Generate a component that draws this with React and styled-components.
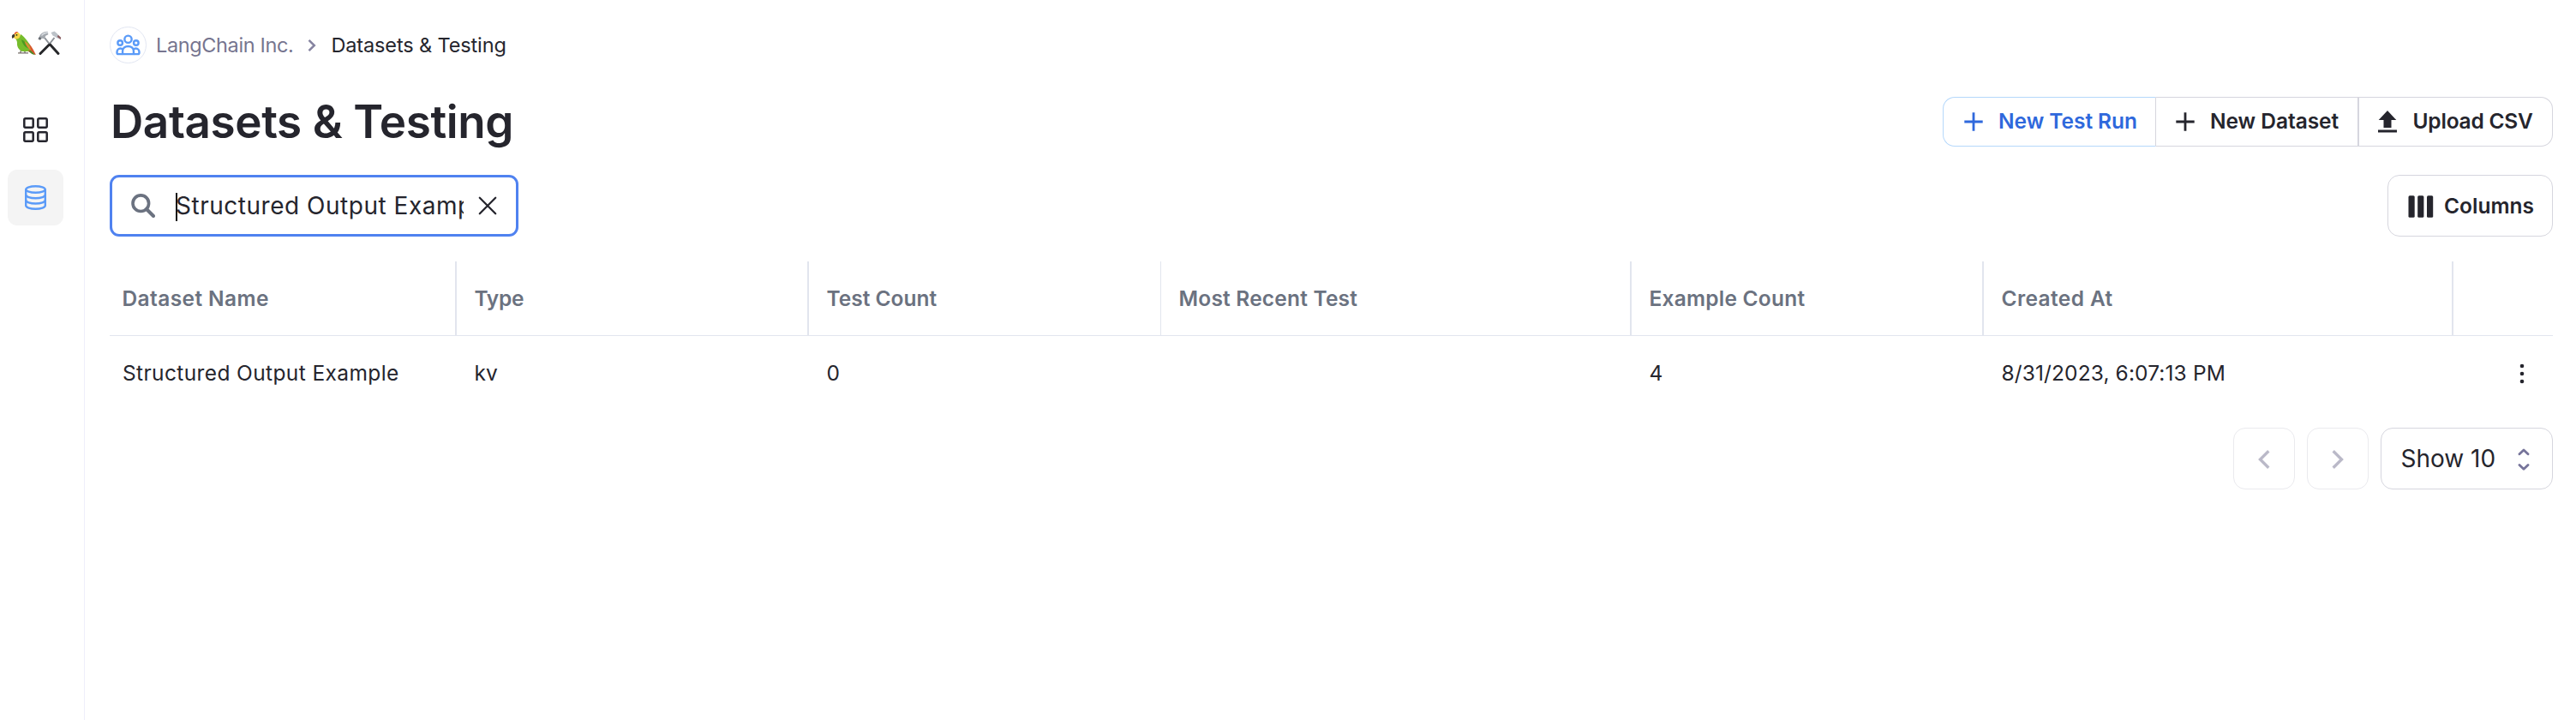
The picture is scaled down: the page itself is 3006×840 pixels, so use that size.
import React from "react";
import styled, { createGlobalStyle } from "styled-components";

const ink = "#25252d";
const blue = "#5b9bf8";
const slate = "#6b7280";
const line = "#e2e5ee";
const outline = "#d6d6de";

const GlobalStyle = createGlobalStyle`
  * { box-sizing: border-box; }
  body {
    margin: 0;
    background: #fff;
    color: ${ink};
    font-family: Inter, "Liberation Sans", sans-serif;
    font-size: 24.5px;
    line-height: 1.2;
  }
  button { font: inherit; color: inherit; background: none; border: 0; padding: 0; }
  svg { display: block; flex: none; }
`;

const Page = styled.div`
  display: flex;
  height: 840px;
  overflow: hidden;
`;

const Sidebar = styled.nav`
  width: 99px;
  flex: none;
  padding: 36px 0 0 9px;
  border-right: 1px solid #eeeefa;
  display: flex;
  flex-direction: column;
`;

const Logo = styled.div`
  display: flex;
  padding-left: 4px;
  margin-bottom: 53px;
`;

const NavItem = styled.a`
  width: 65px;
  height: 65px;
  border-radius: 11px;
  margin-bottom: 14px;
  display: flex;
  align-items: center;
  justify-content: center;
  background: ${(p) => (p.$active ? "#f4f4f4" : "transparent")};
  color: ${(p) => (p.$active ? blue : ink)};
`;

const Main = styled.main`
  flex: 1;
  min-width: 0;
  padding: 31px 27px 0 29px;
`;

const Breadcrumbs = styled.div`
  display: flex;
  align-items: center;
  height: 43px;
  font-size: 23.5px;
  margin-bottom: 39px;
`;

const Avatar = styled.span`
  width: 43px;
  height: 43px;
  border: 1px solid #e2e6f2;
  border-radius: 50%;
  display: flex;
  align-items: center;
  justify-content: center;
  color: ${blue};
  margin-right: 11px;
`;

const Crumb = styled.span`
  padding-top: 1px;
  color: ${(p) => (p.$current ? ink : "#76758f")};
  letter-spacing: ${(p) => (p.$current ? "-0.13px" : "-0.37px")};
  white-space: nowrap;
`;

const CrumbArrow = styled.svg`
  margin: 0 17px 0 17px;
  color: #8583a0;
`;

const TitleRow = styled.header`
  display: flex;
  justify-content: space-between;
  align-items: center;
  height: 58px;
  margin-bottom: 33px;
`;

const Title = styled.h1`
  margin: 0;
  padding: 1px 0 0 1px;
  font-size: 53px;
  font-weight: 600;
  letter-spacing: -0.4px;
`;

const ButtonGroup = styled.div`
  display: flex;
  height: 58px;
`;

const GroupButton = styled.button`
  display: flex;
  align-items: center;
  gap: ${(p) => p.$gap || 18}px;
  width: ${(p) => p.$width}px;
  padding-left: ${(p) => p.$pad || 22}px;
  font-weight: 600;
  letter-spacing: ${(p) => p.$spacing}px;
  white-space: nowrap;
  color: ${(p) => (p.$primary ? "#2f68dc" : ink)};
  border: 1px solid ${(p) => (p.$primary ? "#b5d8fb" : outline)};
  border-left-width: ${(p) => (p.$divider === 0 ? 0 : p.$divider || 1)}px;
  &:first-child {
    border-right-color: ${outline};
    border-radius: 14px 0 0 14px;
  }
  &:not(:first-child):not(:last-child) { border-right: 0; }
  &:last-child { border-radius: 0 14px 14px 0; }
`;

const Toolbar = styled.div`
  display: flex;
  justify-content: space-between;
  height: 72px;
  margin-bottom: 29px;
`;

const SearchBox = styled.div`
  display: flex;
  align-items: center;
  width: 477px;
  border: 3px solid #4f82f0;
  border-radius: 11px;
  padding: 0 22px;
`;

const SearchText = styled.div`
  width: 336px;
  margin: 0 17px 0 24px;
  padding: 2px 0 0;
  display: flex;
  align-items: center;
  overflow: hidden;
  white-space: nowrap;
  font-size: 28px;
  letter-spacing: 0.52px;
`;

const Caret = styled.span`
  width: 2px;
  height: 33px;
  flex: none;
  margin-right: -2px;
  background: #111;
`;

const OutlineButton = styled.button`
  display: flex;
  align-items: center;
  height: 72px;
  width: ${(p) => p.$width}px;
  padding-left: ${(p) => p.$pad}px;
  padding-top: 1px;
  gap: ${(p) => p.$gap || 0}px;
  border: 1px solid ${outline};
  border-radius: 14px;
  font-size: ${(p) => (p.$large ? 28 : 24.5)}px;
  font-weight: ${(p) => (p.$large ? 400 : 600)};
  letter-spacing: 0;
  white-space: nowrap;
`;

const PageButton = styled.button`
  width: 72px;
  height: 72px;
  border: 1px solid #eaeaee;
  border-radius: 14px;
  display: flex;
  align-items: center;
  justify-content: center;
  padding-top: 1px;
  color: #bab9c8;
`;

const Table = styled.div`
  display: flex;
  flex-direction: column;
`;

const TableRow = styled.div`
  display: grid;
  grid-template-columns: 405px 411px 411px 549px 411px 548px 116px;
  height: ${(p) => (p.$head ? 87 : 86)}px;
  border-bottom: ${(p) => (p.$head ? `1px solid ${line}` : "0")};
`;

const HeadCell = styled.div`
  display: flex;
  align-items: center;
  padding: 2px 0 0 20.5px;
  font-weight: 600;
  color: ${slate};
  letter-spacing: ${(p) => p.$spacing || 0}px;
  border-right: ${(p) => (p.$rule === undefined ? 2 : p.$rule)}px solid ${line};
  &:first-child { padding-left: 14.5px; }
`;

const Cell = styled.div`
  display: flex;
  align-items: center;
  padding: 1px 0 0 20.5px;
  letter-spacing: ${(p) => p.$spacing || 0}px;
  &:first-child { padding-left: 15px; }
  &:last-child { padding-left: 77px; }
`;

const Pager = styled.footer`
  display: flex;
  justify-content: flex-end;
  gap: 14px;
  margin-top: 21px;
`;

const ParrotIcon = () => (
  <svg width="30" height="30" viewBox="0 0 30 30">
    <path d="M8 25.800h12M11.500 23l-1 3.200M15.500 23l1 3.200" stroke="#77706a" strokeWidth="1.300" fill="none" />
    <path d="M17 11c5 4 8 9 12 17l-4-1.200-9-5z" fill="#d9552b" />
    <path d="M22.500 22.500l5.700 5.700-4-1.200-3.500-3z" fill="#4d8b2a" />
    <path d="M4 7c3 1 5.500 0 7.500-3 4.500 3.500 9 9 10.500 14 .8 3-1 6-3.500 6H13C8.500 22.500 6.500 17.500 7 14 7 11 5 9.500 4 7z" fill="#76bd2c" />
    <path d="M12 10c4 2 8 6 10 11-5-1-9-5-10-11z" fill="#4b9a22" />
    <path d="M15.500 12c3.500 2 6.500 6 8 11-3.500-2-6.500-6-8-11z" fill="#e08a35" />
    <path d="M2 6C3 1.500 9 0 10.500 4.500c.5 3-2 5-4.500 5C4 9.500 3 8.500 2 6z" fill="#f3d648" />
    <path d="M3.500 3.500C5 .8 7 .8 8.500 1.500 6.500 1.800 5.500 2.500 5 4z" fill="#e2492f" />
    <path d="M3.500 4C.8 4 .3 6.500 1.500 9 2.700 8 4.500 7.500 4.300 5z" fill="#3c3a38" />
    <circle cx="6.500" cy="4.800" r=".9" fill="#222" />
  </svg>
);

const HammersIcon = () => (
  <svg width="30" height="30" viewBox="0 0 30 30">
    <path d="M9 8l7 9M20.500 8L13 17.500" stroke="#8d9298" strokeWidth="2" />
    <path d="M14 16.500L4 26.500M15.500 16l9.500 10.500" stroke="#26272a" strokeWidth="3" strokeLinecap="round" />
    <path d="M1.500 9.500l2.500-5C6 1.800 9.500.4 12.700.7l.6 3.600-3 1.500-1.500 3.500-3-.6-1.800 2.300z" fill="#a3a8ae" />
    <path d="M5 5c2-2.700 5-3.700 8-3.700l.3 1.500C10 2.800 7.500 4.300 6 6z" fill="#d9dde1" />
    <path d="M1.500 9.500L3 7l2.300 1.500-1.300 2z" fill="#656a70" />
    <path d="M16.500 2l4-1.500 3 2.500 4.200 4.700.3 2.300-4.700-1.800-2.800-1.800-2-1z" fill="#bcc2c8" />
    <path d="M23.800 7l4.300 3.300-.5-3L24.800 4.800z" fill="#8b5a5e" />
  </svg>
);

const GridIcon = () => (
  <svg width="29" height="29" viewBox="0 0 29 29" fill="none" stroke="currentColor" strokeWidth="2.500">
    <rect x="1.300" y="1.300" width="10.400" height="10.400" rx="1.400" />
    <rect x="17.300" y="1.300" width="10.400" height="10.400" rx="1.400" />
    <rect x="1.300" y="17.300" width="10.400" height="10.400" rx="1.400" />
    <rect x="17.300" y="17.300" width="10.400" height="10.400" rx="1.400" />
  </svg>
);

const DatabaseIcon = () => (
  <svg width="25" height="29" viewBox="0 0 25 29" fill="none" stroke="currentColor" strokeWidth="2.400">
    <ellipse cx="12.500" cy="5" rx="11.300" ry="3.800" />
    <path d="M1.200 5v18.800c0 2.200 5 4 11.300 4s11.300-1.800 11.300-4V5" />
    <path d="M1.200 11.200c0 2.200 5 4 11.300 4s11.300-1.800 11.300-4M1.200 17.500c0 2.200 5 4 11.300 4s11.300-1.800 11.300-4" />
  </svg>
);

const PeopleIcon = () => (
  <svg width="29" height="25" viewBox="0 0 30 26" fill="none" stroke="currentColor" strokeWidth="2.500" strokeLinejoin="round">
    <circle cx="15" cy="6" r="4.300" />
    <circle cx="5.300" cy="10.400" r="2.900" />
    <circle cx="24.700" cy="10.400" r="2.900" />
    <path d="M8.300 24v-3.500c0-3.700 3-6 6.700-6s6.700 2.300 6.700 6V24z" />
    <path d="M8.300 24H3.200c-1 0-1.700-.7-1.700-1.700v-.8c0-2.500 1.700-4.300 4-4.300 1.200 0 2.400.4 3.200 1.200M21.700 24h5.100c1 0 1.700-.7 1.700-1.700v-.8c0-2.500-1.700-4.300-4-4.300-1.200 0-2.400.4-3.200 1.200" />
  </svg>
);

const SearchIcon = () => (
  <svg width="28" height="28" viewBox="0 0 28 28" fill="none" stroke={slate} strokeWidth="3.600">
    <circle cx="11.300" cy="11.200" r="9.300" />
    <path d="M18 18l8 8" strokeLinecap="round" strokeWidth="4" />
  </svg>
);

const CloseIcon = () => (
  <svg width="22" height="22" viewBox="0 0 22 22" stroke={ink} strokeWidth="2.300" strokeLinecap="round">
    <path d="M1.800 1.800l18.400 18.400M20.200 1.800L1.800 20.200" />
  </svg>
);

const PlusIcon = () => (
  <svg width="22" height="22" viewBox="0 0 22 22" stroke="currentColor" strokeWidth="2.800">
    <path d="M11 .3v21.400M.3 11h21.400" />
  </svg>
);

const UploadIcon = () => (
  <svg width="22" height="26" viewBox="0 0 22 26" fill="currentColor">
    <path d="M11 0l10.300 11H15.500v9h-9v-9H.7zM0 22.600h22v3H0z" />
  </svg>
);

const ColumnsIcon = () => (
  <svg width="30" height="26" viewBox="0 0 30 26" fill="currentColor">
    <rect x=".5" y=".3" width="7.200" height="25.400" rx="1.500" />
    <rect x="11.200" y=".3" width="7.200" height="25.400" rx="1.500" />
    <rect x="22" y=".3" width="7.200" height="25.400" rx="1.500" />
  </svg>
);

const ChevronIcon = ({ left }) => (
  <svg width="14" height="22" viewBox="0 0 14 22" fill="none" stroke="currentColor" strokeWidth="3.400">
    <path d={left ? "M12.300 1.200L2.500 11l9.800 9.800" : "M1.700 1.200L11.500 11l-9.800 9.800"} />
  </svg>
);

const SelectorIcon = () => (
  <svg width="14" height="26" viewBox="0 0 14 26" fill="none" stroke="#76749a" strokeWidth="2.800" strokeLinecap="round" strokeLinejoin="round">
    <path d="M2 6.700l5-4.700 5 4.700M2 19.500l5 4.700 5-4.700" />
  </svg>
);

const MoreIcon = () => (
  <svg width="6" height="24" viewBox="0 0 6 24" fill={ink}>
    <circle cx="3" cy="3" r="2.300" />
    <circle cx="3" cy="12" r="2.300" />
    <circle cx="3" cy="21" r="2.300" />
  </svg>
);

export default function App() {
  return (
    <Page>
      <GlobalStyle />
      <Sidebar>
        <Logo>
          <ParrotIcon />
          <HammersIcon />
        </Logo>
        <NavItem><GridIcon /></NavItem>
        <NavItem $active><DatabaseIcon /></NavItem>
      </Sidebar>
      <Main>
        <Breadcrumbs>
          <Avatar><PeopleIcon /></Avatar>
          <Crumb>LangChain Inc.</Crumb>
          <CrumbArrow width="10" height="16" viewBox="0 0 10 16" fill="none" stroke="currentColor" strokeWidth="2.500">
            <path d="M1.500 1.800L7.800 8l-6.300 6.200" />
          </CrumbArrow>
          <Crumb $current>Datasets &amp; Testing</Crumb>
        </Breadcrumbs>
        <TitleRow>
          <Title>Datasets &amp; Testing</Title>
          <ButtonGroup>
            <GroupButton $primary $width={249} $pad={24} $spacing={-0.04}><PlusIcon />New Test Run</GroupButton>
            <GroupButton $divider={0} $width={235} $pad={23} $spacing={-0.05}><PlusIcon />New Dataset</GroupButton>
            <GroupButton $divider={2} $width={228} $gap={18.5} $spacing={-0.2}><UploadIcon />Upload CSV</GroupButton>
          </ButtonGroup>
        </TitleRow>
        <Toolbar>
          <SearchBox>
            <SearchIcon />
            <SearchText><Caret />Structured Output Example</SearchText>
            <CloseIcon />
          </SearchBox>
          <OutlineButton $width={193} $pad={22.5} $gap={12.5}><ColumnsIcon />Columns</OutlineButton>
        </Toolbar>
        <Table>
          <TableRow $head>
            <HeadCell $spacing={0.4}>Dataset Name</HeadCell>
            <HeadCell $spacing={-0.3}>Type</HeadCell>
            <HeadCell $rule={1}>Test Count</HeadCell>
            <HeadCell $spacing={0.2}>Most Recent Test</HeadCell>
            <HeadCell $spacing={0.23}>Example Count</HeadCell>
            <HeadCell $spacing={0.38}>Created At</HeadCell>
            <HeadCell $rule={0} />
          </TableRow>
          <TableRow>
            <Cell $spacing={0.38}>Structured Output Example</Cell>
            <Cell>kv</Cell>
            <Cell>0</Cell>
            <Cell />
            <Cell>4</Cell>
            <Cell $spacing={0.12}>8/31/2023, 6:07:13 PM</Cell>
            <Cell><MoreIcon /></Cell>
          </TableRow>
        </Table>
        <Pager>
          <PageButton><ChevronIcon left /></PageButton>
          <PageButton><ChevronIcon /></PageButton>
          <OutlineButton $large $width={201} $pad={22.5} $gap={26}>Show 10<SelectorIcon /></OutlineButton>
        </Pager>
      </Main>
    </Page>
  );
}
